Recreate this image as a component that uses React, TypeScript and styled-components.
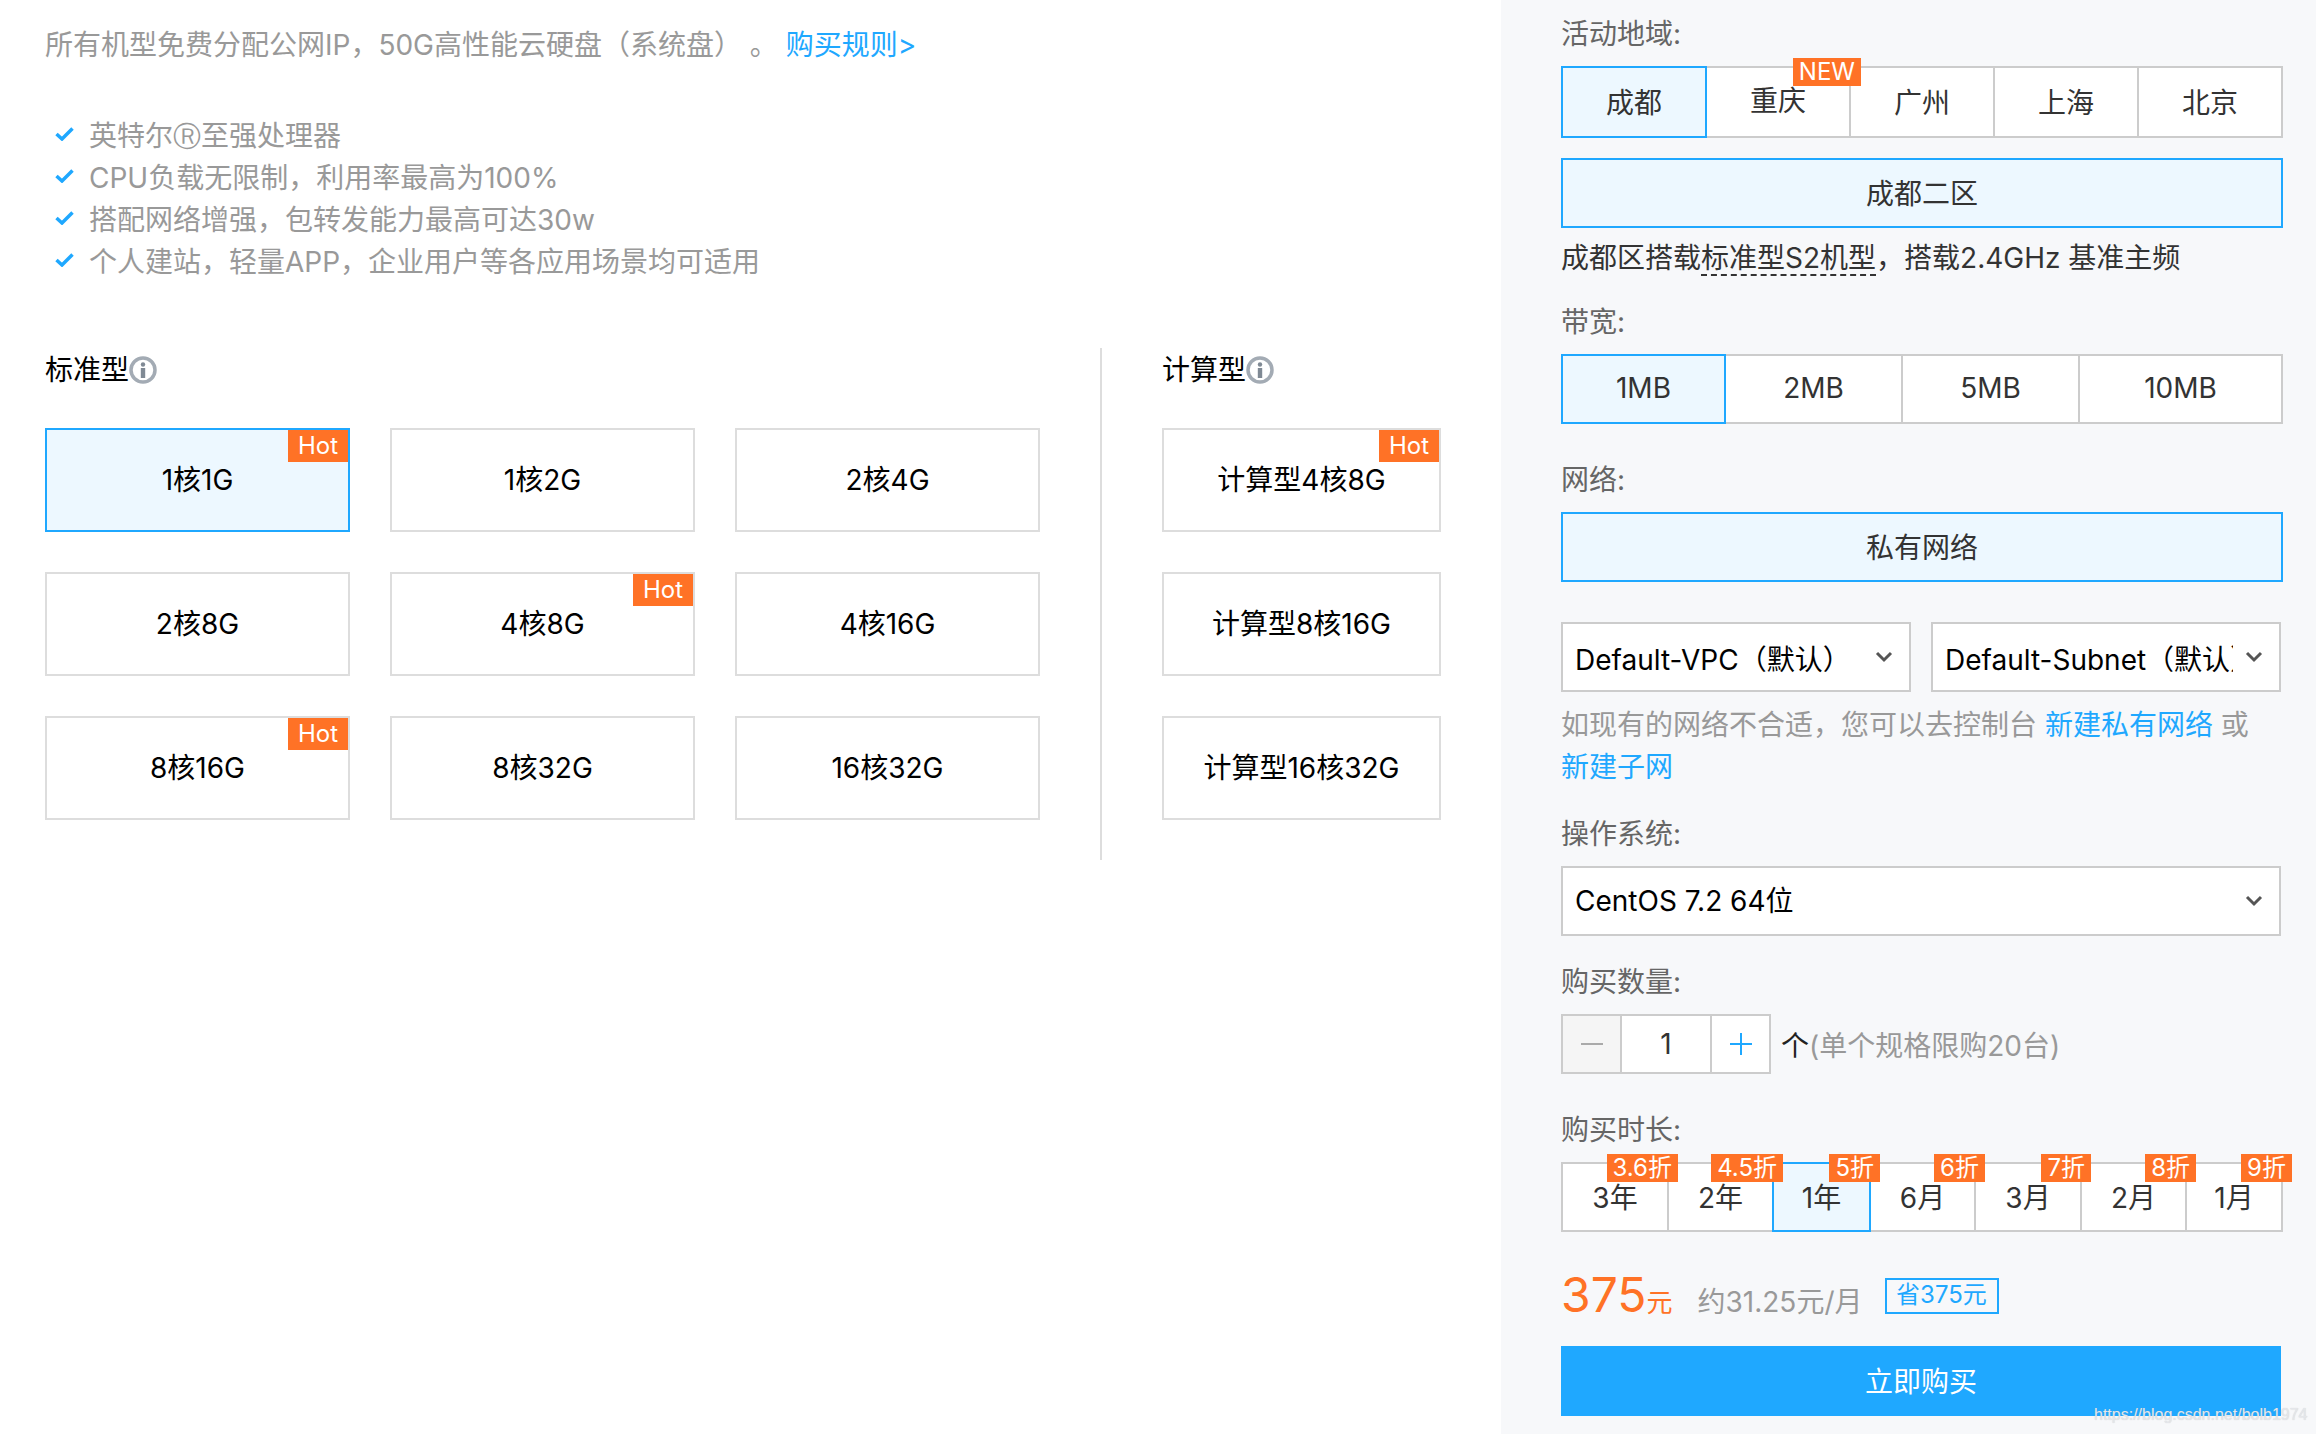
import React from "react";
import styled, { createGlobalStyle } from "styled-components";

const GlobalStyle = createGlobalStyle`
  html, body {
    margin: 0;
    padding: 0;
    background: #fff;
  }
  body {
    font-family: Inter, "Noto Sans CJK SC", sans-serif;
    font-size: 28px;
    color: #333;
  }
  * {
    box-sizing: border-box;
  }
`;

const Page = styled.div`
  position: relative;
  display: flex;
  width: 2316px;
  height: 1434px;
  overflow: hidden;
`;

/* 左侧机型 */
const Left = styled.div`
  flex: 0 0 1501px;
  padding: 24px 0 0 45px;
`;

const Notice = styled.p`
  margin: 0;
  line-height: 42px;
  color: #999;
`;

const Link = styled.a`
  color: #1fa8ff;
  white-space: nowrap;
`;

const Features = styled.ul`
  margin: 47px 0 67px;
  padding: 0;
  list-style: none;
`;

const Feature = styled.li`
  display: flex;
  align-items: center;
  gap: 15px;
  height: 42px;
  padding-left: 10px;
  color: #999;
`;

const Registered = styled.span`
  display: inline-block;
  width: 28px;
  font-family: "DejaVu Sans", sans-serif;
  font-size: 28px;
  line-height: 28px;
  text-align: center;
`;

const Types = styled.div`
  display: flex;
`;

const TypeGroup = styled.div<{ $divided?: boolean }>`
  padding-bottom: 40px;
  ${(p) => p.$divided && "margin-left: 60px; padding-left: 60px; border-left: 2px solid #ddd;"}
`;

const TypeTitle = styled.div`
  display: flex;
  align-items: center;
  height: 40px;
  margin-bottom: 40px;
  color: #000;

  svg {
    margin-top: 4px;
  }
`;

const CardGrid = styled.div<{ $cols: number; $width: number }>`
  display: grid;
  grid-template-columns: repeat(${(p) => p.$cols}, ${(p) => p.$width}px);
  grid-auto-rows: 104px;
  gap: 40px;
`;

const Card = styled.div<{ $active?: boolean }>`
  position: relative;
  display: flex;
  align-items: center;
  justify-content: center;
  border: 2px solid ${(p) => (p.$active ? "#1fa8ff" : "#ddd")};
  background: ${(p) => (p.$active ? "#edf8ff" : "#fff")};
  color: #000;
  line-height: 32px;
`;

const Hot = styled.span`
  position: absolute;
  top: 0;
  right: 0;
  width: 60px;
  height: 32px;
  background: #ff7226;
  color: #fff;
  font-size: 24px;
  line-height: 32px;
  text-align: center;
`;

/* 右侧购买面板 */
const Panel = styled.div`
  flex: 0 0 815px;
  padding: 14px 33px 0 60px;
  background: #f7f8fa;
`;

const Label = styled.div<{ $top?: number }>`
  margin-top: ${(p) => p.$top ?? 0}px;
  margin-bottom: 12px;
  line-height: 40px;
  color: #666;
`;

const Tabs = styled.div<{ $height: number }>`
  display: flex;
  height: ${(p) => p.$height}px;
`;

const Tab = styled.div<{ $active?: boolean; $width?: number }>`
  position: relative;
  display: flex;
  align-items: center;
  justify-content: center;
  ${(p) => (p.$width ? `width: ${p.$width}px;` : "flex: 1;")}
  margin-left: -2px;
  padding-bottom: 2px;
  border: 2px solid ${(p) => (p.$active ? "#1fa8ff" : "#ccc")};
  background: ${(p) => (p.$active ? "#edf8ff" : "#fff")};
  ${(p) => p.$active && "z-index: 1;"}
  &:first-child {
    margin-left: 0;
  }
`;

const Raised = styled.span`
  padding-bottom: 5px;
`;

const Tag = styled.span<{ $right: number }>`
  position: absolute;
  z-index: 2;
  top: -10px;
  right: ${(p) => p.$right}px;
  height: 28px;
  padding: 0 6px;
  background: #ff7226;
  color: #fff;
  font-size: 24px;
  line-height: 28px;
  white-space: nowrap;
`;

const Wide = styled.div<{ $top?: number }>`
  display: flex;
  align-items: center;
  justify-content: center;
  height: 70px;
  margin-top: ${(p) => p.$top ?? 0}px;
  padding-bottom: 2px;
  border: 2px solid #1fa8ff;
  background: #edf8ff;
`;

const Desc = styled.div`
  height: 40px;
  margin-top: 10px;
  line-height: 40px;
`;

const Dashed = styled.span`
  display: inline-block;
  line-height: 32px;
  border-bottom: 2px dashed #333;
`;

const Selects = styled.div`
  display: grid;
  grid-template-columns: 350px 350px;
  gap: 20px;
  margin-top: 40px;
`;

const Select = styled.div<{ $full?: boolean }>`
  display: flex;
  align-items: center;
  justify-content: space-between;
  ${(p) => p.$full && "width: 720px;"}
  height: 70px;
  padding: 0 16px 0 12px;
  border: 2px solid #ccc;
  background: #fff;
  color: #000;
`;

const SelectText = styled.span<{ $low?: boolean }>`
  overflow: hidden;
  max-width: 288px;
  padding-top: ${(p) => (p.$low ? "6px" : "0")};
  line-height: 40px;
  white-space: nowrap;
`;

const Help = styled.p`
  margin: 12px 0 0;
  line-height: 42px;
  color: #999;
`;

const Stepper = styled.div`
  display: flex;
  align-items: center;
`;

const StepBox = styled.div`
  display: flex;
  height: 60px;
  border: 2px solid #ccc;
  background: #fff;
`;

const StepButton = styled.div<{ $off?: boolean }>`
  display: flex;
  align-items: center;
  justify-content: center;
  width: 57px;
  background: ${(p) => (p.$off ? "#f5f5f5" : "#fff")};
`;

const StepValue = styled.div`
  display: flex;
  align-items: center;
  justify-content: center;
  width: 92px;
  border-left: 2px solid #ccc;
  border-right: 2px solid #ccc;
  color: #333;
`;

const Unit = styled.span`
  margin-left: 10px;
  color: #222;
`;

const Limit = styled.span`
  color: #999;
`;

const PriceRow = styled.div`
  display: flex;
  align-items: baseline;
  height: 40px;
  margin-top: 43px;
`;

const Price = styled.span`
  font-size: 48px;
  line-height: 40px;
  color: #ff7226;
`;

const Yuan = styled.span`
  font-size: 26px;
  color: #ff7226;
`;

const Monthly = styled.span`
  margin-left: 25px;
  color: #999;
`;

const Save = styled.span`
  align-self: flex-start;
  width: 114px;
  height: 36px;
  margin-top: 3px;
  margin-left: 22px;
  border: 2px solid #1fa8ff;
  color: #1fa8ff;
  font-size: 24px;
  line-height: 30px;
  text-align: center;
`;

const BuyButton = styled.div`
  display: flex;
  align-items: center;
  justify-content: center;
  width: 720px;
  height: 70px;
  margin-top: 31px;
  padding-bottom: 3px;
  background: #1fa8ff;
  color: #fff;
`;

const Watermark = styled.span`
  position: absolute;
  left: 2094px;
  top: 1403px;
  color: #e4e6ea;
  font-family: "Liberation Sans", sans-serif;
  font-size: 16px;
  line-height: 24px;
  white-space: nowrap;
  text-shadow: 0 0 1px rgba(150, 150, 150, 0.4);
`;

const CheckIcon = () => (
  <svg width="19" height="14" viewBox="0 0 19 14" fill="none">
    <path d="M1.5 7l5.5 5 10.5-10.5" stroke="#1fa8ff" strokeWidth="3.5" />
  </svg>
);

const InfoIcon = () => (
  <svg width="28" height="28" viewBox="0 0 28 28" fill="none">
    <circle cx="14" cy="14" r="12" stroke="#a3abb4" strokeWidth="3.5" />
    <circle cx="14" cy="8.5" r="2.2" fill="#7f8994" />
    <rect x="11.8" y="12" width="4.4" height="10" fill="#7f8994" />
  </svg>
);

const Chevron = () => (
  <svg width="18" height="12" viewBox="0 0 18 12" fill="none">
    <path d="M2 2l7 7 7-7" stroke="#555" strokeWidth="3" />
  </svg>
);

const standardCards = [
  { name: "1核1G", hot: true, active: true },
  { name: "1核2G" },
  { name: "2核4G" },
  { name: "2核8G" },
  { name: "4核8G", hot: true },
  { name: "4核16G" },
  { name: "8核16G", hot: true },
  { name: "8核32G" },
  { name: "16核32G" },
];

const computeCards = [
  { name: "计算型4核8G", hot: true },
  { name: "计算型8核16G" },
  { name: "计算型16核32G" },
];

const durations = [
  { name: "3年", tag: "3.6折", width: 108 },
  { name: "2年", tag: "4.5折", width: 107 },
  { name: "1年", tag: "5折", width: 99, active: true },
  { name: "6月", tag: "6折", width: 107 },
  { name: "3月", tag: "7折", width: 108 },
  { name: "2月", tag: "8折", width: 107 },
  { name: "1月", tag: "9折", width: 98 },
];

const App: React.FC = () => {
  return (
    <Page>
      <GlobalStyle />
      <Left>
        <Notice>
          所有机型免费分配公网IP，50G高性能云硬盘（系统盘） 。 <Link>购买规则&gt;</Link>
        </Notice>
        <Features>
          <Feature>
            <CheckIcon />
            <span>
              英特尔<Registered>Ⓡ</Registered>至强处理器
            </span>
          </Feature>
          <Feature>
            <CheckIcon />
            CPU负载无限制，利用率最高为100%
          </Feature>
          <Feature>
            <CheckIcon />
            搭配网络增强，包转发能力最高可达30w
          </Feature>
          <Feature>
            <CheckIcon />
            个人建站，轻量APP，企业用户等各应用场景均可适用
          </Feature>
        </Features>
        <Types>
          <TypeGroup>
            <TypeTitle>
              标准型
              <InfoIcon />
            </TypeTitle>
            <CardGrid $cols={3} $width={305}>
              {standardCards.map((card) => (
                <Card key={card.name} $active={card.active}>
                  {card.name}
                  {card.hot && <Hot>Hot</Hot>}
                </Card>
              ))}
            </CardGrid>
          </TypeGroup>
          <TypeGroup $divided>
            <TypeTitle>
              计算型
              <InfoIcon />
            </TypeTitle>
            <CardGrid $cols={1} $width={279}>
              {computeCards.map((card) => (
                <Card key={card.name}>
                  {card.name}
                  {card.hot && <Hot>Hot</Hot>}
                </Card>
              ))}
            </CardGrid>
          </TypeGroup>
        </Types>
      </Left>

      <Panel>
        <Label>活动地域:</Label>
        <Tabs $height={72}>
          <Tab $active>成都</Tab>
          <Tab>
            <Raised>重庆</Raised>
            <Tag $right={-12}>NEW</Tag>
          </Tab>
          <Tab>广州</Tab>
          <Tab>上海</Tab>
          <Tab>北京</Tab>
        </Tabs>
        <Wide $top={20}>成都二区</Wide>
        <Desc>
          成都区搭载<Dashed>标准型S2机型</Dashed>，搭载2.4GHz 基准主频
        </Desc>

        <Label $top={24}>带宽:</Label>
        <Tabs $height={70}>
          <Tab $active $width={165}>1MB</Tab>
          <Tab $width={179}>2MB</Tab>
          <Tab $width={179}>5MB</Tab>
          <Tab $width={205}>10MB</Tab>
        </Tabs>

        <Label $top={36}>网络:</Label>
        <Wide>私有网络</Wide>
        <Selects>
          <Select>
            <SelectText $low>Default-VPC（默认）</SelectText>
            <Chevron />
          </Select>
          <Select>
            <SelectText $low>Default-Subnet（默认）</SelectText>
            <Chevron />
          </Select>
        </Selects>
        <Help>
          如现有的网络不合适，您可以去控制台 <Link>新建私有网络</Link> 或 <Link>新建子网</Link>
        </Help>

        <Label $top={26}>操作系统:</Label>
        <Select $full>
          <SelectText>CentOS 7.2 64位</SelectText>
          <Chevron />
        </Select>

        <Label $top={26}>购买数量:</Label>
        <Stepper>
          <StepBox>
            <StepButton $off>
              <svg width="24" height="24" viewBox="0 0 24 24">
                <path d="M1 12h22" stroke="#aaa" strokeWidth="2" />
              </svg>
            </StepButton>
            <StepValue>1</StepValue>
            <StepButton>
              <svg width="24" height="24" viewBox="0 0 24 24">
                <path d="M1 12h22M12 1v22" stroke="#1fa8ff" strokeWidth="2" />
              </svg>
            </StepButton>
          </StepBox>
          <Unit>个</Unit>
          <Limit>(单个规格限购20台)</Limit>
        </Stepper>

        <Label $top={36}>购买时长:</Label>
        <Tabs $height={70}>
          {durations.map((item) => (
            <Tab key={item.name} $active={item.active} $width={item.width}>
              {item.name}
              <Tag $right={-11}>{item.tag}</Tag>
            </Tab>
          ))}
        </Tabs>

        <PriceRow>
          <Price>375</Price>
          <Yuan>元</Yuan>
          <Monthly>约31.25元/月</Monthly>
          <Save>省375元</Save>
        </PriceRow>
        <BuyButton>立即购买</BuyButton>
      </Panel>
      <Watermark>https://blog.csdn.net/bolb1974</Watermark>
    </Page>
  );
};

export default App;
